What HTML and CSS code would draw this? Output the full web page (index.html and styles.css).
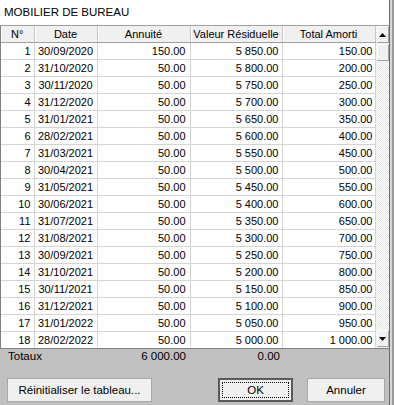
FILE: index.html
```html
<!DOCTYPE html>
<html lang="fr">
	<head>
		<meta charset="UTF-8">
		<title>Mobilier de bureau</title>
		<link rel="stylesheet" href="styles.css">
	</head>
	<body>
		<div class="desk">
			<main class="dialog">
				<div class="title">MOBILIER DE BUREAU</div>

				<div class="grid">
					<table class="table">
						<colgroup>
							<col class="c-num">
							<col class="c-date">
							<col class="c-ann">
							<col class="c-val">
							<col class="c-tot">
						</colgroup>
						<thead>
							<tr>
								<th>N°</th>
								<th>Date</th>
								<th>Annuité</th>
								<th>Valeur Résiduelle</th>
								<th>Total Amorti</th>
							</tr>
						</thead>
						<tbody id="rows"></tbody>
					</table>
					<div class="scrollbar">
						<div class="arrow up"><svg viewBox="0 0 7 4" width="7" height="4"><path d="M0 4 L3.5 0 L7 4z" fill="#000"/></svg></div>
						<div class="thumb"></div>
						<div class="track"></div>
						<div class="arrow down"><svg viewBox="0 0 7 4" width="7" height="4"><path d="M0 0 L3.5 4 L7 0z" fill="#000"/></svg></div>
					</div>
				</div>

				<div class="bottom">
					<div class="totals">
						<span class="t-label">Totaux</span>
						<span class="t-ann">6 000.00</span>
						<span class="t-val">0.00</span>
					</div>
					<div class="buttons">
						<button class="button reset">Réinitialiser le tableau...</button>
						<button class="button ok"><span class="focus">OK</span></button>
						<button class="button cancel">Annuler</button>
					</div>
				</div>
			</main>
			<div class="edge"></div>
		</div>

	<script>
		const rows = document.getElementById('rows')
		const dates = ['30/09/2020', '31/10/2020', '30/11/2020', '31/12/2020', '31/01/2021', '28/02/2021',
			'31/03/2021', '30/04/2021', '31/05/2021', '30/06/2021', '31/07/2021', '31/08/2021',
			'30/09/2021', '31/10/2021', '30/11/2021', '31/12/2021', '31/01/2022', '28/02/2022']
		const fmt = n => {
			const s = n.toFixed(2).split('.')
			return s[0].replace(/\B(?=(\d{3})+(?!\d))/g, ' ') + '.' + s[1]
		}
		let total = 0
		dates.forEach((d, i) => {
			const ann = i === 0 ? 150 : 50
			total += ann
			const tr = document.createElement('tr')
			const cells = [i + 1, d, fmt(ann), fmt(6000 - total), fmt(total)]
			cells.forEach(c => {
				const td = document.createElement('td')
				td.textContent = c
				tr.appendChild(td)
			})
			rows.appendChild(tr)
		})
	</script>
	</body>
</html>
```

FILE: styles.css
```css
html, body {
	margin: 0;
	padding: 0;
	font-family: "Liberation Sans", Arial, sans-serif;
	font-size: 11px;
	color: #000;
	height: 100%;
	overflow: hidden;
}

.desk {
	display: flex;
	height: 405px;
	background-color: #c8c8c8;
}

.dialog {
	width: 389px;
	display: flex;
	flex-direction: column;
	background-color: #fff;
}

.edge {
	flex: 1;
	border-left: 1px solid #6e6e6e;
	background-color: #d6d6d6;
	box-shadow: inset -2px 0 0 #9a9a9a;
}

.title {
	height: 25px;
	padding-left: 4px;
	font-size: 11.5px;
	line-height: 24px;
}

.grid {
	display: flex;
	border-top: 1px solid #a0a0a0;
	border-left: 1px solid #808080;
	border-bottom: 1px solid #808080;
}

.table {
	width: 374px;
	border-collapse: collapse;
	table-layout: fixed;
}

.c-num { width: 33px; }
.c-date { width: 63px; }
.c-ann { width: 93px; }
.c-val { width: 92px; }
.c-tot { width: 93px; }

.table th {
	height: 16px;
	padding: 0;
	font-weight: normal;
	background-color: #f0f0f0;
	border-right: 1px solid #c8c8c8;
	border-bottom: 1px solid #a0a0a0;
	box-shadow: inset 1px 0 0 #fff;
	text-align: center;
}

.table td {
	height: 16px;
	padding: 0 4px 0 0;
	border-right: 1px solid #d4d4d4;
	border-bottom: 1px solid #d4d4d4;
	text-align: right;
	white-space: nowrap;
}

.table td:nth-child(1) { padding-right: 3px; }
.table td:nth-child(2) { text-align: center; padding: 0; }
.table td:nth-child(4) { padding-right: 3px; }
.table td:nth-child(5) { padding-right: 2px; }

.table tr:last-child td {
	border-bottom: none;
}

.scrollbar {
	width: 14px;
	display: flex;
	flex-direction: column;
	background-color: #f0f0f0;
	background-image: repeating-conic-gradient(#fff 0 25%, #e4e4e4 0 50%);
	background-size: 2px 2px;
}

.arrow, .thumb {
	height: 15px;
	display: flex;
	align-items: center;
	justify-content: center;
	background-color: #f0f0f0;
	border: 1px solid #fff;
	border-right-color: #a0a0a0;
	border-bottom-color: #a0a0a0;
	margin: 0 0 1px 1px;
}

.track {
	flex: 1;
}

.bottom {
	flex: 1;
	background-color: #c0c0c0;
	display: flex;
	flex-direction: column;
}

.totals {
	display: flex;
	height: 14px;
	line-height: 14px;
	font-size: 11.5px;
}

.t-label {
	width: 186px;
	padding-left: 8px;
	box-sizing: border-box;
}

.t-ann {
	width: 0;
	display: flex;
	justify-content: flex-end;
	white-space: nowrap;
}

.t-val {
	width: 94px;
	text-align: right;
}

.buttons {
	display: flex;
	align-items: center;
	margin-top: 15px;
	padding-left: 7px;
}

.button {
	all: unset;
	box-sizing: border-box;
	height: 24px;
	display: flex;
	align-items: center;
	justify-content: center;
	background-color: #f0f0f0;
	border: 1px solid #a8a8a8;
	font-family: "Liberation Sans", Arial, sans-serif;
	font-size: 11.5px;
	color: #000;
}

.reset {
	width: 145px;
}

.ok {
	width: 75px;
	margin-left: 66px;
	border: 2px solid #5a5a5a;
	padding: 2px;
}

.ok .focus {
	flex: 1;
	align-self: stretch;
	display: flex;
	align-items: center;
	justify-content: center;
	border: 1px dotted #000;
}

.cancel {
	width: 78px;
	margin-left: 14px;
}
```
